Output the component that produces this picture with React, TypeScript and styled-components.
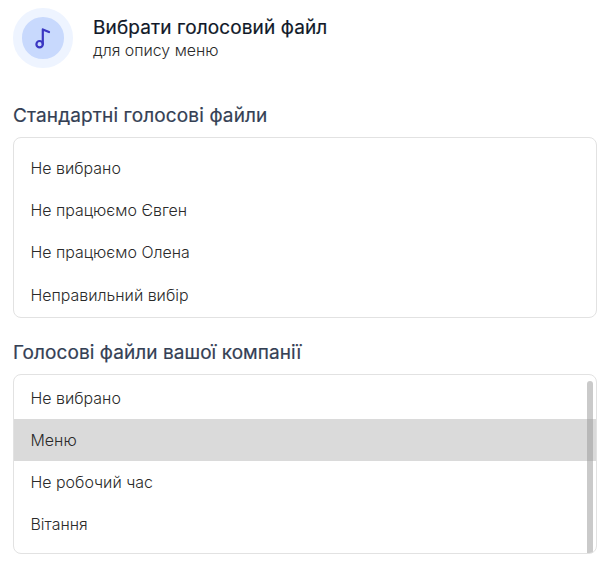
import React from "react";
import styled, { createGlobalStyle } from "styled-components";

const GlobalStyle = createGlobalStyle`
  * { box-sizing: border-box; }
  body { margin: 0; background: #fff; font-family: Inter, "Liberation Sans", sans-serif; overflow: hidden; }
`;

const Page = styled.main`
  width: 602px;
  height: 571px;
  padding: 8px 5.5px 0 13px;
`;

const Header = styled.header`
  display: flex;
  height: 60px;
  gap: 20.5px;
`;

const Badge = styled.div`
  display: flex;
  align-items: center;
  justify-content: center;
  width: 59.5px;
  height: 59.5px;
  border: 9px solid #eef4ff;
  border-radius: 50%;
  background: #c8d9fd;
`;

const NoteIcon = styled.svg`
  flex: none;
  width: 42px;
  height: 42px;
  fill: none;
  stroke: #3a36c2;
  stroke-width: 2.2;
  stroke-linecap: round;
  stroke-linejoin: round;
`;

const Title = styled.h1`
  margin: 8px 0 0;
  font-size: 19px;
  line-height: 24px;
  font-weight: 400;
  letter-spacing: 0.12px;
  color: #101828;
  -webkit-text-stroke: 0.2px currentColor;
`;

const Subtitle = styled.p`
  margin: 1px 0 0;
  font-size: 15.9px;
  line-height: 20px;
  font-weight: 300;
  color: #2a2a2a;
`;

const Section = styled.section<{ $top: number }>`
  margin-top: ${(p) => p.$top}px;
`;

const SectionTitle = styled.h2<{ $tracking: number }>`
  margin: 0;
  font-size: 19px;
  line-height: 24px;
  font-weight: 400;
  letter-spacing: ${(p) => p.$tracking}px;
  color: #344054;
  -webkit-text-stroke: 0.2px currentColor;
`;

const ListBox = styled.div`
  display: flex;
  height: 180.5px;
  margin-top: 9px;
  border: 1px solid #e2e2e2;
  border-radius: 8px;
  overflow: hidden;
  position: relative;
`;

const List = styled.ul<{ $pad: number }>`
  flex: 1;
  margin: 0;
  padding: ${(p) => p.$pad}px 0 0;
  list-style: none;
`;

const Item = styled.li<{ $selected?: boolean }>`
  height: 42.3px;
  padding: 1px 0 0 16.5px;
  font-size: 15.95px;
  line-height: 42.3px;
  font-weight: 300;
  color: #2a2a2a;
  background: ${(p) => (p.$selected ? "#dadada" : "transparent")};
`;

const Scrollbar = styled.div`
  position: absolute;
  top: 6px;
  right: 3px;
  bottom: 0;
  width: 6px;
  border-radius: 3px 3px 0 0;
  background: rgba(150, 150, 150, 0.5);
`;

const standard = ["Не вибрано", "Не працюємо Євген", "Не працюємо Олена", "Неправильний вибір"];
const company = ["Не вибрано", "Меню", "Не робочий час", "Вітання"];

export default function App() {
  return (
    <Page>
      <GlobalStyle />
      <Header>
        <Badge>
          <NoteIcon viewBox="0 0 42 42">
            <circle cx="17.6" cy="27.2" r="3.2" />
            <path d="M20.8 27V12.4l6.2 2.6" />
          </NoteIcon>
        </Badge>
        <div>
          <Title>Вибрати голосовий файл</Title>
          <Subtitle>для опису меню</Subtitle>
        </div>
      </Header>
      <Section $top={36}>
        <SectionTitle $tracking={0.13}>Стандартні голосові файли</SectionTitle>
        <ListBox>
          <List $pad={8.8}>{standard.map((t) => <Item key={t}>{t}</Item>)}</List>
        </ListBox>
      </Section>
      <Section $top={23}>
        <SectionTitle $tracking={0.07}>Голосові файли вашої компанії</SectionTitle>
        <ListBox>
          <List $pad={2}>{company.map((t) => <Item key={t} $selected={t === "Меню"}>{t}</Item>)}</List>
          <Scrollbar />
        </ListBox>
      </Section>
    </Page>
  );
}
